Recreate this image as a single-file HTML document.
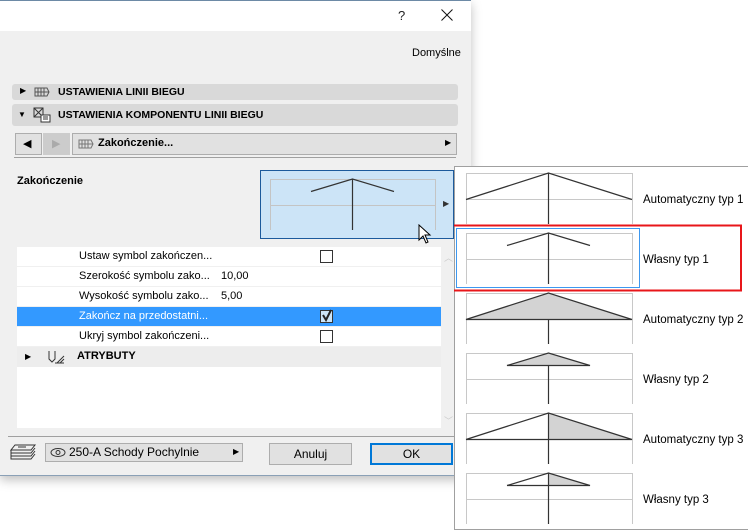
<!DOCTYPE html>
<html><head><meta charset="utf-8"><style>
body{margin:0;width:748px;height:530px;background:#fff;position:relative;overflow:hidden;font-family:"Liberation Sans","DejaVu Sans",sans-serif;font-size:11px;color:#000}
.a{position:absolute}
.hdr{position:absolute;left:12px;width:446px;background:#d9d9d9;border-radius:3px;font-weight:bold;font-size:10.5px}
.row{position:absolute;left:17px;width:424px;height:19px;border-bottom:1px solid #f0f0f0;background:#fff}
.row span{position:absolute;left:62px;top:3px}
.row b{position:absolute;left:204px;top:3px;font-weight:normal}
.cb{position:absolute;left:303px;top:3px;width:11px;height:11px;border:1px solid #333;background:#fff}
.btn{position:absolute;background:#e1e1e1;border:1px solid #adadad;text-align:center}
</style></head><body>
<div class="a" style="left:0;top:0;width:471px;height:474px;background:#f0f0f0;border-top:1px solid #6d8aa6;border-bottom:1px solid #8aa0b6;box-shadow:0 4px 10px rgba(0,0,0,.25)"></div>
<div class="a" style="left:0;top:1px;width:471px;height:30px;background:#fff"></div>
<div class="a" style="left:398px;top:8px;font-size:13px;color:#222">?</div>
<svg class="a" style="left:441px;top:9px" width="12" height="12"><path d="M0.5 0.5l11 11M11.5 0.5l-11 11" stroke="#111" stroke-width="1"/></svg>
<div class="a" style="left:412px;top:47px;font-size:11px">Domyślne</div>

<div class="hdr" style="top:84px;height:16px"><span class="a" style="left:8px;top:2px;font-size:8px">▶</span>
<svg class="a" style="left:22px;top:3px" width="16" height="10"><path d="M1 1h12l2 4-2 4H1zM4 1v8M7 1v8M10 1v8M1 5h14" fill="none" stroke="#555" stroke-width="1"/></svg>
<span class="a" style="left:46px;top:2px">USTAWIENIA LINII BIEGU</span></div>
<div class="hdr" style="top:104px;height:22px"><span class="a" style="left:6px;top:6px;font-size:8px">▼</span>
<svg class="a" style="left:21px;top:3px" width="18" height="16"><rect x="1" y="1" width="9" height="9" fill="none" stroke="#333"/><path d="M1 1l9 9M10 1L1 10" stroke="#333"/><rect x="8" y="8" width="9" height="7" fill="#fff" stroke="#333"/><path d="M10 10h5M10 12h5" stroke="#333"/></svg>
<span class="a" style="left:46px;top:5px">USTAWIENIA KOMPONENTU LINII BIEGU</span></div>

<div class="btn" style="left:15px;top:133px;width:25px;height:20px"><span class="a" style="left:7px;top:3px;font-size:11px">◀</span></div>
<div class="btn" style="left:43px;top:133px;width:25px;height:20px;background:#ccc;border-color:#ccc;color:#aaa"><span class="a" style="left:8px;top:3px;font-size:11px">▶</span></div>
<div class="btn" style="left:72px;top:133px;width:383px;height:20px;text-align:left">
<svg class="a" style="left:5px;top:5px" width="16" height="10"><path d="M1 1h12l2 4-2 4H1zM4 1v8M7 1v8M10 1v8M1 5h14" fill="none" stroke="#777"/></svg>
<span class="a" style="left:25px;top:3px;font-weight:bold">Zakończenie...</span><span class="a" style="left:372px;top:4px;font-size:8px">▶</span></div>
<div class="a" style="left:14px;top:157px;width:442px;height:1px;background:#a0a0a0"></div>
<div class="a" style="left:17px;top:175px;font-weight:bold">Zakończenie</div>

<div class="a" style="left:260px;top:170px;width:192px;height:67px;background:#cce4f7;border:1px solid #1c5a9c"></div>
<svg class="a" style="left:260px;top:170px" width="200" height="70"><path d="M10.5 60V9.5H175.5V60M10.5 35.5H175.5" fill="none" stroke="#c4c4c4"/><path d="M92.5 9v51M51 21.5L92.5 9L134 21.5" fill="none" stroke="#333" stroke-width="1.2"/></svg>
<div class="a" style="left:443px;top:199px;font-size:8px;color:#333">▶</div>
<svg class="a" style="left:418px;top:224px" width="16" height="22"><path d="M1 1v15l4-4 3 7 2-1-3-7h5z" fill="#fff" stroke="#000"/></svg>

<div class="a" style="left:17px;top:247px;width:424px;height:181px;background:#fff"></div>
<div class="row" style="top:247px"><span>Ustaw symbol zakończen...</span><i class="cb"></i></div>
<div class="row" style="top:267px"><span>Szerokość symbolu zako...</span><b>10,00</b></div>
<div class="row" style="top:287px"><span>Wysokość symbolu zako...</span><b>5,00</b></div>
<div class="row" style="top:307px;background:#3399ff;color:#fff"><span>Zakończ na przedostatni...</span><i class="cb" style="background:#cce4f7"><svg class="a" style="left:0;top:-2px" width="12" height="13"><path d="M2 6l3 5 5-10" fill="none" stroke="#222" stroke-width="2"/></svg></i></div>
<div class="row" style="top:327px"><span>Ukryj symbol zakończeni...</span><i class="cb"></i></div>
<div class="row" style="top:347px;background:#ededed;height:20px;border:0"><span style="left:8px;font-size:8px;top:5px">▶</span>
<svg class="a" style="left:30px;top:3px" width="20" height="15"><path d="M2 1v8l3 3 3-3V1M10 13l7-7M13 13l4-4M8 13h9" fill="none" stroke="#333"/></svg>
<span style="left:60px;font-weight:bold">ATRYBUTY</span></div>
<div class="a" style="left:444px;top:251px;color:#ccc;font-size:9px">︿</div>
<div class="a" style="left:444px;top:414px;color:#ccc;font-size:9px">﹀</div>
<div class="a" style="left:8px;top:436px;width:446px;height:1px;background:#a0a0a0"></div>

<svg class="a" style="left:9px;top:444px" width="28" height="17"><path d="M6 1h20l-4 5H2zM2 6v3h20l4-5M2 9v3h20l4-5M2 12v3h20l4-5M9 3h8" fill="none" stroke="#333"/></svg>
<div class="btn" style="left:45px;top:443px;width:196px;height:17px;text-align:left">
<svg class="a" style="left:4px;top:3px" width="16" height="11"><ellipse cx="8" cy="5.5" rx="7" ry="4" fill="none" stroke="#333"/><circle cx="8" cy="5.5" r="2" fill="none" stroke="#333"/></svg>
<span class="a" style="left:23px;top:1px;font-size:12px">250-A Schody Pochylnie</span><span class="a" style="left:187px;top:3px;font-size:8px">▶</span></div>
<div class="btn" style="left:269px;top:443px;width:81px;height:20px;line-height:20px;font-size:12px">Anuluj</div>
<div class="btn" style="left:370px;top:443px;width:79px;height:18px;line-height:18px;border:2px solid #0078d7;font-size:12px">OK</div>

<div class="a" style="left:454px;top:166px;width:293px;height:362px;background:#fff;border:1px solid #a0a0a0"></div>
<svg class="a" style="left:454px;top:160px" width="294" height="370" font-family="Liberation Sans, sans-serif" font-size="11.5">
<g fill="none" stroke="#c8c8c8"><path d="M12.5 64V13.5H178.5V64M12.5 39.5H178.5"/><path d="M12.5 124V73.5H178.5V124M12.5 99.5H178.5"/><path d="M12.5 184V133.5H178.5V184M12.5 159.5H178.5"/><path d="M12.5 244V193.5H178.5V244M12.5 219.5H178.5"/><path d="M12.5 304V253.5H178.5V304M12.5 279.5H178.5"/><path d="M12.5 364V313.5H178.5V364M12.5 339.5H178.5"/></g>
<g stroke="#333" stroke-width="1.2" fill="none">
<path d="M94.5 13v51M12 39.5L94.5 13L178 39.5"/>
<path d="M94.5 73v51M53 85.5L94.5 73L136 85.5"/>
<path d="M94.5 133v51"/><path d="M12 159.5L94.5 133L178 159.5Z" fill="#d3d3d3"/>
<path d="M94.5 193v51"/><path d="M53 205.5L94.5 193L136 205.5Z" fill="#d3d3d3"/>
<path d="M94.5 253L178 279.5H94.5Z" fill="#d3d3d3" stroke="none"/><path d="M94.5 253v51M12 279.5L94.5 253L178 279.5H12"/>
<path d="M94.5 313L136 325.5H94.5Z" fill="#d3d3d3" stroke="none"/><path d="M94.5 313v51M53 325.5L94.5 313L136 325.5H53"/>
</g>
<rect x="2.5" y="68.5" width="183" height="59" fill="none" stroke="#3d98f0"/>
<rect x="-1" y="65.5" width="288" height="65" fill="none" stroke="#e8161a" stroke-width="2"/>
<g fill="#000"><text x="189" y="43">Automatyczny typ 1</text><text x="189" y="103">Własny typ 1</text><text x="189" y="163">Automatyczny typ 2</text><text x="189" y="223">Własny typ 2</text><text x="189" y="283">Automatyczny typ 3</text><text x="189" y="343">Własny typ 3</text></g>
</svg>
</body></html>
